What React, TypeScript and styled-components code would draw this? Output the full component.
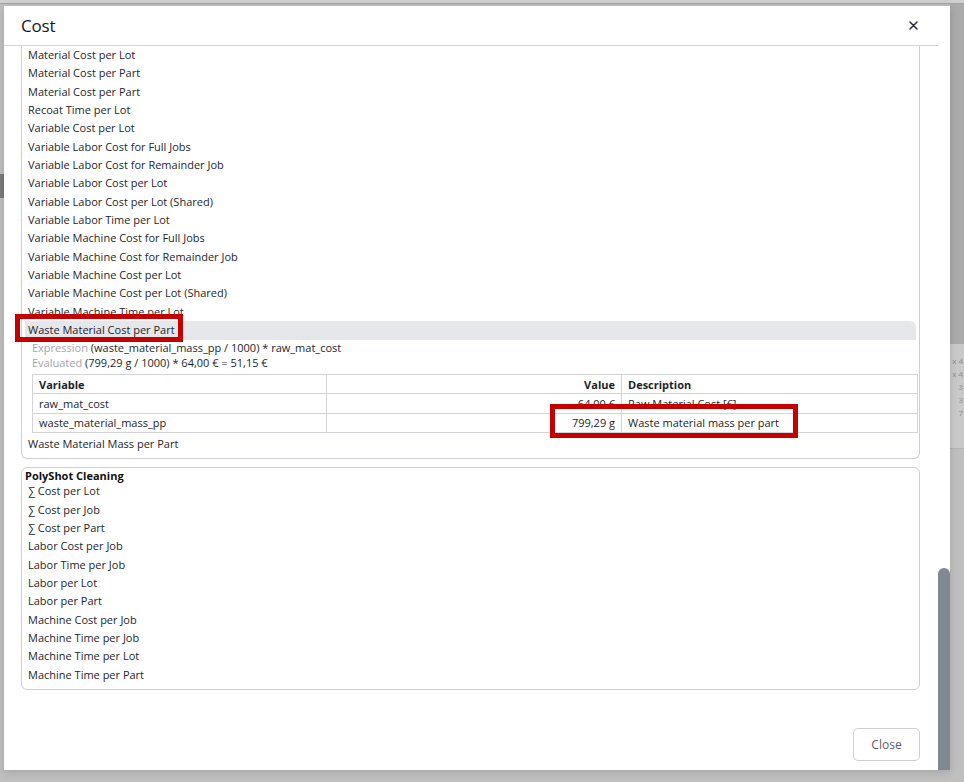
import React from "react";
import styled, { createGlobalStyle } from "styled-components";

const GlobalStyle = createGlobalStyle`
  html, body { margin: 0; padding: 0; }
  body {
    font-family: "Open Sans", "Noto Sans", sans-serif;
    background: #bfbfbf;
    color: #1d1f2b;
  }
  * { box-sizing: border-box; }
`;

const Page = styled.div`
  position: relative;
  width: 964px;
  height: 782px;
  overflow: hidden;
  background: #bfbfbf;
  display: flex;
  flex-direction: column;
`;

const BackTop = styled.div`
  height: 4px;
  background: #cfcfcf;
  border-bottom: 1px solid #a3a3a3;
  flex: none;
`;

const BackBody = styled.div`
  flex: 1;
  display: flex;
  justify-content: space-between;
`;

const BackLeft = styled.div`
  width: 4px;
  display: flex;
  flex-direction: column;
  padding-top: 170px;
`;

const BackLeftBlock = styled.div`
  height: 24px;
  background: #7a7a7a;
`;

const BackRight = styled.div`
  width: 14px;
  display: flex;
  flex-direction: column;
`;

const BackRightDark = styled.div`
  height: 340px;
  background: #aaaaaa;
`;

const BackRightLight = styled.div`
  height: 105px;
  background: #c9c9c9;
  border-bottom: 1px solid #b3b3b3;
  padding: 10px 1px 0 0;
  font-size: 8px;
  line-height: 13px;
  color: #8a8a8a;
  white-space: nowrap;
  text-align: right;
`;

const Modal = styled.div`
  position: absolute;
  left: 4px;
  top: 6px;
  width: 946px;
  height: 764px;
  background: #ffffff;
  display: flex;
  box-shadow: 0 2px 8px rgba(0, 0, 0, 0.15);
`;

const MainColumn = styled.div`
  width: 934px;
  display: flex;
  flex-direction: column;
`;

const Header = styled.div`
  height: 40px;
  flex: none;
  display: flex;
  align-items: center;
  justify-content: space-between;
  padding: 0 20px 0 17px;
  border-bottom: 1px solid #d4d4d4;
`;

const Title = styled.h1`
  margin: 0;
  font-size: 17px;
  font-weight: 400;
  color: #15161c;
  letter-spacing: -0.2px;
`;

const CloseX = styled.button`
  border: none;
  background: transparent;
  padding: 0;
  width: 10px;
  height: 10px;
  display: flex;
  align-items: center;
  justify-content: center;
  cursor: pointer;
`;

const Body = styled.div`
  flex: 1;
  overflow: hidden;
  padding: 0 18px 0 17px;
  display: flex;
  flex-direction: column;
  gap: 8px;
`;

const Card = styled.div<{ $clipped?: boolean }>`
  border: 1px solid #cfcfd3;
  border-top: ${(p) => (p.$clipped ? "none" : "1px solid #cfcfd3")};
  border-radius: ${(p) => (p.$clipped ? "0 0 6px 6px" : "6px")};
  padding: ${(p) => (p.$clipped ? "0 3px 5px 3px" : "1px 3px 5px 3px")};
  display: flex;
  flex-direction: column;
`;

const CardTitle = styled.div`
  font-size: 11px;
  font-weight: 700;
  line-height: 13px;
  color: #111;
`;

const Item = styled.div<{ $active?: boolean }>`
  position: relative;
  height: 18.35px;
  line-height: 18.35px;
  font-size: 11px;
  padding-left: 3px;
  white-space: nowrap;
  background: ${(p) => (p.$active ? "#e6e7ea" : "transparent")};
  border-radius: ${(p) => (p.$active ? "0 6px 0 0" : "0")};
`;

const Detail = styled.div`
  padding: 0 0 0 7px;
  display: flex;
  flex-direction: column;
`;

const DetailLine = styled.div`
  font-size: 11px;
  line-height: 15.5px;
  white-space: nowrap;
`;

const Muted = styled.span`
  color: #a4a4ab;
`;

const Table = styled.table`
  margin-top: 3.5px;
  margin-bottom: 2px;
  width: 885px;
  border-collapse: collapse;
  font-size: 11px;
  table-layout: fixed;
`;

const Th = styled.th<{ $right?: boolean }>`
  border: 1px solid #d4d4d8;
  height: 19px;
  padding: 0 6px;
  font-weight: 700;
  text-align: ${(p) => (p.$right ? "right" : "left")};
`;

const Td = styled.td<{ $right?: boolean }>`
  position: relative;
  border: 1px solid #d4d4d8;
  height: 19.5px;
  padding: 0 6px;
  text-align: ${(p) => (p.$right ? "right" : "left")};
  white-space: nowrap;
`;

const Marker = styled.div<{ $l: number; $t: number; $w: number; $h: number }>`
  position: absolute;
  left: ${(p) => p.$l}px;
  top: ${(p) => p.$t}px;
  width: ${(p) => p.$w}px;
  height: ${(p) => p.$h}px;
  border: 5px solid #c50000;
  pointer-events: none;
  z-index: 2;
`;

const Footer = styled.div`
  height: 58px;
  flex: none;
  display: flex;
  align-items: flex-end;
  justify-content: flex-end;
  padding: 0 18px 9px 0;
`;

const CloseButton = styled.button`
  width: 67px;
  height: 33px;
  border: 1px solid #d0d0d4;
  border-radius: 5px;
  background: #fff;
  color: #5b5d66;
  font-family: inherit;
  font-size: 12px;
  cursor: pointer;
`;

const ScrollTrack = styled.div`
  width: 12px;
  display: flex;
  flex-direction: column;
  justify-content: flex-end;
`;

const ScrollThumb = styled.div`
  height: 202px;
  background: #808892;
  border-radius: 6px 6px 0 0;
`;

const topItems = [
  "Material Cost per Lot",
  "Material Cost per Part",
  "Material Cost per Part",
  "Recoat Time per Lot",
  "Variable Cost per Lot",
  "Variable Labor Cost for Full Jobs",
  "Variable Labor Cost for Remainder Job",
  "Variable Labor Cost per Lot",
  "Variable Labor Cost per Lot (Shared)",
  "Variable Labor Time per Lot",
  "Variable Machine Cost for Full Jobs",
  "Variable Machine Cost for Remainder Job",
  "Variable Machine Cost per Lot",
  "Variable Machine Cost per Lot (Shared)",
  "Variable Machine Time per Lot",
];

const cleaningItems = [
  "∑ Cost per Lot",
  "∑ Cost per Job",
  "∑ Cost per Part",
  "Labor Cost per Job",
  "Labor Time per Job",
  "Labor per Lot",
  "Labor per Part",
  "Machine Cost per Job",
  "Machine Time per Job",
  "Machine Time per Lot",
  "Machine Time per Part",
];

export default function App() {
  return (
    <>
      <GlobalStyle />
      <Page>
        <BackTop />
        <BackBody>
          <BackLeft>
            <BackLeftBlock />
          </BackLeft>
          <BackRight>
            <BackRightDark />
            <BackRightLight>
              x 4<br />x 4<br />3<br />3<br />7
            </BackRightLight>
          </BackRight>
        </BackBody>
        <Modal>
          <MainColumn>
            <Header>
              <Title>Cost</Title>
              <CloseX aria-label="close">
                <svg width="9" height="9" viewBox="0 0 9 9">
                  <path d="M1 1 L8 8 M8 1 L1 8" stroke="#2a2c3a" strokeWidth="1.5" strokeLinecap="round" />
                </svg>
              </CloseX>
            </Header>
            <Body>
              <Card $clipped>
                {topItems.map((t, i) => (
                  <Item key={i}>{t}</Item>
                ))}
                <Item $active>
                  Waste Material Cost per Part
                  <Marker $l={-10} $t={-7} $w={168} $h={28} />
                </Item>
                <Detail>
                  <DetailLine>
                    <Muted>Expression</Muted> (waste_material_mass_pp / 1000) * raw_mat_cost
                  </DetailLine>
                  <DetailLine>
                    <Muted>Evaluated</Muted> (799,29 g / 1000) * 64,00 € = 51,15 €
                  </DetailLine>
                  <Table>
                    <colgroup>
                      <col style={{ width: "294px" }} />
                      <col style={{ width: "295px" }} />
                      <col style={{ width: "296px" }} />
                    </colgroup>
                    <thead>
                      <tr>
                        <Th>Variable</Th>
                        <Th $right>Value</Th>
                        <Th>Description</Th>
                      </tr>
                    </thead>
                    <tbody>
                      <tr>
                        <Td>raw_mat_cost</Td>
                        <Td $right>64,00 €</Td>
                        <Td>Raw Material Cost [€]</Td>
                      </tr>
                      <tr>
                        <Td>waste_material_mass_pp</Td>
                        <Td $right>
                          799,29 g
                          <Marker $l={223} $t={-10} $w={248} $h={34} />
                        </Td>
                        <Td>Waste material mass per part</Td>
                      </tr>
                    </tbody>
                  </Table>
                </Detail>
                <Item>Waste Material Mass per Part</Item>
              </Card>
              <Card>
                <CardTitle>PolyShot Cleaning</CardTitle>
                {cleaningItems.map((t, i) => (
                  <Item key={i}>{t}</Item>
                ))}
              </Card>
            </Body>
            <Footer>
              <CloseButton>Close</CloseButton>
            </Footer>
          </MainColumn>
          <ScrollTrack>
            <ScrollThumb />
          </ScrollTrack>
        </Modal>
      </Page>
    </>
  );
}
